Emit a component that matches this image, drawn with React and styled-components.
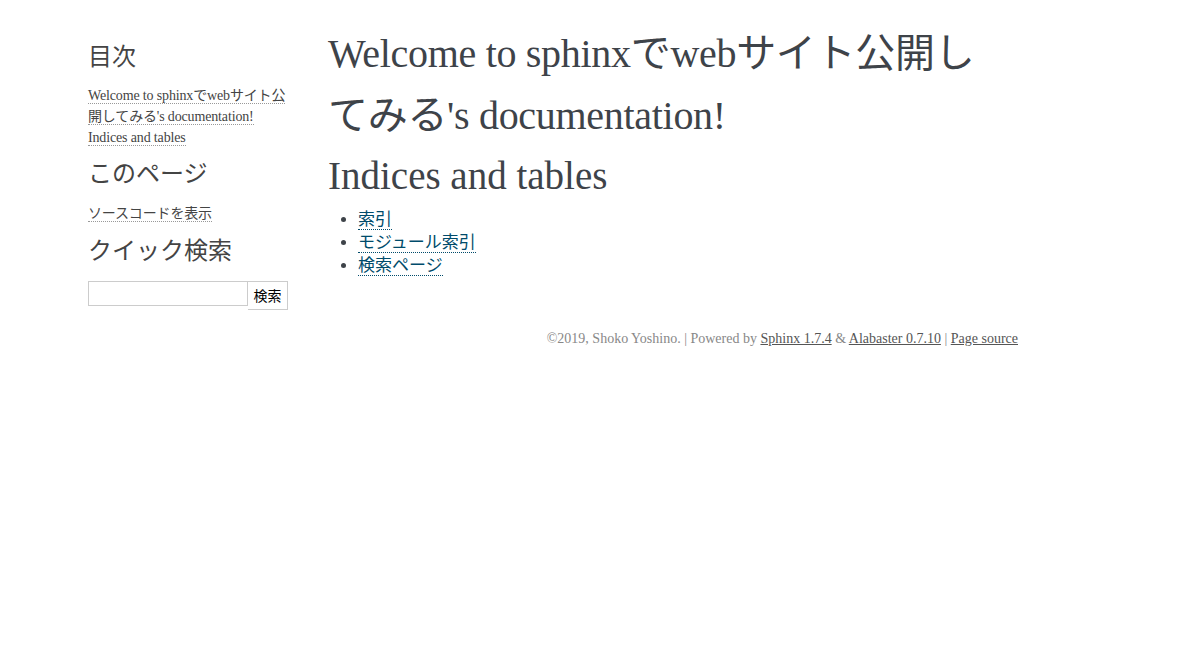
import React from "react";
import styled, { createGlobalStyle } from "styled-components";

const Global = createGlobalStyle`
  html, body { margin: 0; padding: 0; background: #fff; }
  body {
    font-family: "Liberation Serif", "Noto Sans CJK JP", serif;
    font-size: 17px;
    color: #3e4349;
  }
`;

const Page = styled.div`
  width: 940px;
  margin: 23px 0 0 78px;
`;

const Document = styled.div`
  display: flex;
  align-items: flex-start;
`;

const Sidebar = styled.aside`
  width: 220px;
  flex: none;
  box-sizing: border-box;
  padding: 18px 10px 0;
  font-size: 14px;
  line-height: 1.5;
`;

const SideHeading = styled.h3`
  font-family: "Liberation Serif", "Noto Sans CJK JP", serif;
  color: #444;
  font-size: 24px;
  font-weight: normal;
  margin: 0 0 5px 0;
  padding: 0;
  line-height: 1.4;
`;

const SideList = styled.ul`
  list-style: none;
  margin: ${(p) => (p.$top ? `${p.$top}px` : "10px")} 0 ${(p) => (p.$bottom ? `${p.$bottom}px` : "10px")};
  padding: 0;
  color: #000;
  letter-spacing: -0.15px;
`;

const SideItem = styled.li`
  margin: 0;
  padding: 0;
`;

const SideLink = styled.a`
  color: #444;
  text-decoration: none;
  border-bottom: 1px dotted #999;
`;

const SearchRow = styled.form`
  display: flex;
  align-items: flex-start;
  margin: 12px 0 0;
`;

const SearchInput = styled.input`
  width: 160px;
  height: 25px;
  box-sizing: border-box;
  border: 1px solid #ccc;
  border-radius: 0;
  padding: 2px 4px;
  font-size: 14px;
  margin: 0;
  outline: none;
`;

const SearchButton = styled.button`
  width: 41px;
  height: 29px;
  box-sizing: border-box;
  border: 1px solid #ccc;
  border-left: none;
  background: #fff;
  color: #000;
  font-family: "Noto Sans CJK JP", sans-serif;
  font-size: 14px;
  padding: 0;
  margin: 0;
`;

const Body = styled.main`
  flex: 1;
  min-width: 0;
  padding: 0 30px;
`;

const Title = styled.h1`
  font-family: "Liberation Serif", "Noto Sans CJK JP", serif;
  font-weight: normal;
  font-size: 40px;
  letter-spacing: -0.3px;
  line-height: 62px;
  margin: 0;
  padding: 0;
  color: #3e4349;
`;

const Section = styled.h2`
  font-family: "Liberation Serif", "Noto Sans CJK JP", serif;
  font-weight: normal;
  font-size: 39px;
  line-height: 1.5;
  margin: 0 0 2px;
  padding: 0;
  color: #3e4349;
`;

const List = styled.ul`
  margin: 0 0 0 30px;
  padding: 0;
  line-height: 23px;
`;

const Item = styled.li`
  font-size: 17px;
`;

const BodyLink = styled.a`
  color: #004b6b;
  text-decoration: none;
  border-bottom: 1px dotted #004b6b;
`;

const Footer = styled.footer`
  width: 940px;
  margin: 21px 0 30px;
  text-align: right;
  font-size: 14px;
  color: #888;
`;

const FooterLink = styled.a`
  color: #555;
  text-decoration: underline;
`;

export default function App() {
  return (
    <>
      <Global />
      <Page>
        <Document>
          <Sidebar>
            <SideHeading>目次</SideHeading>
            <SideList>
              <SideItem>
                <SideLink href="#">Welcome to sphinxでwebサイト公開してみる's documentation!</SideLink>
              </SideItem>
              <SideItem>
                <SideLink href="#">Indices and tables</SideLink>
              </SideItem>
            </SideList>
            <SideHeading>このページ</SideHeading>
            <SideList $top={12} $bottom={11}>
              <SideItem>
                <SideLink href="#">ソースコードを表示</SideLink>
              </SideItem>
            </SideList>
            <SideHeading>クイック検索</SideHeading>
            <SearchRow onSubmit={(e) => e.preventDefault()}>
              <SearchInput type="text" />
              <SearchButton type="submit">検索</SearchButton>
            </SearchRow>
          </Sidebar>
          <Body>
            <Title>Welcome to sphinxでwebサイト公開してみる's documentation!</Title>
            <Section>Indices and tables</Section>
            <List>
              <Item><BodyLink href="#">索引</BodyLink></Item>
              <Item><BodyLink href="#">モジュール索引</BodyLink></Item>
              <Item><BodyLink href="#">検索ページ</BodyLink></Item>
            </List>
          </Body>
        </Document>
        <Footer>
          ©2019, Shoko Yoshino. | Powered by <FooterLink href="#">Sphinx 1.7.4</FooterLink> &amp;{" "}
          <FooterLink href="#">Alabaster 0.7.10</FooterLink> | <FooterLink href="#">Page source</FooterLink>
        </Footer>
      </Page>
    </>
  );
}
